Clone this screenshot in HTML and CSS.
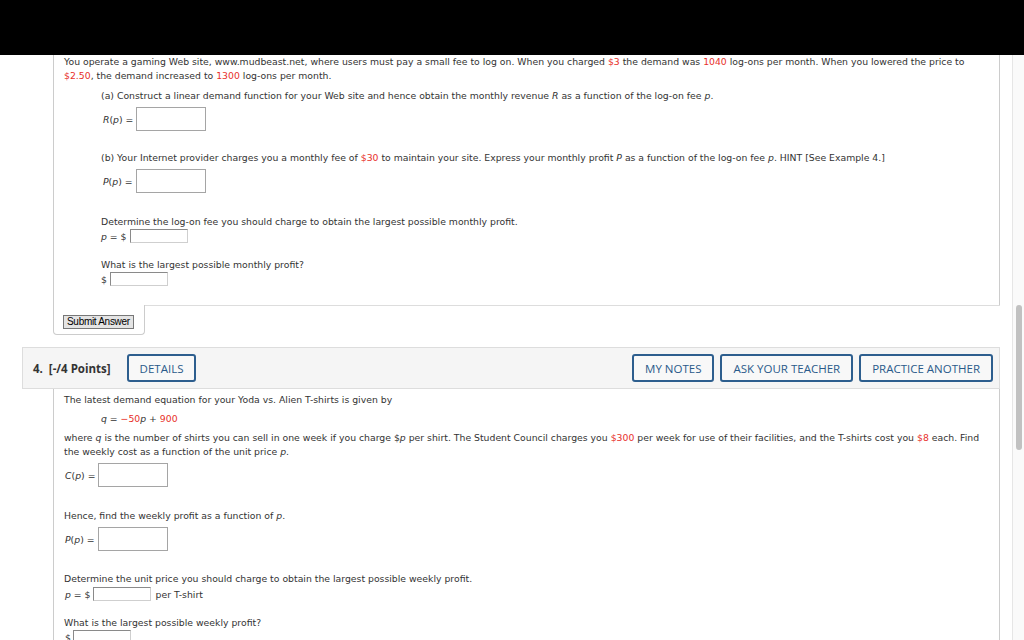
FILE: index.html
```html
<!DOCTYPE html>
<html lang="en">
<head>
<meta charset="utf-8">
<title>Question</title>
<link rel="stylesheet" href="styles.css">
</head>
<body>
<div class="topbar"></div>
<div class="viewport">
  <main class="main">
    <section class="panel">
      <p class="para">You operate a gaming Web site, www.mudbeast.net, where users must pay a small fee to log on. When you charged <span class="red">$3</span> the demand was <span class="red">1040</span> log-ons per month. When you lowered the price to <span class="red">$2.50</span>, the demand increased to <span class="red">1300</span> log-ons per month.</p>
      <div class="part">
        <p class="line">(a) Construct a linear demand function for your Web site and hence obtain the monthly revenue <i>R</i> as a function of the log-on fee <i>p</i>.</p>
        <div class="ans big"><span class="lbl"><i>R</i>(<i>p</i>) =</span><span class="box"></span></div>
        <p class="line gap">(b) Your Internet provider charges you a monthly fee of <span class="red">$30</span> to maintain your site. Express your monthly profit <i>P</i> as a function of the log-on fee <i>p</i>. HINT [See Example 4.]</p>
        <div class="ans big"><span class="lbl"><i>P</i>(<i>p</i>) =</span><span class="box"></span></div>
        <p class="line gapb">Determine the log-on fee you should charge to obtain the largest possible monthly profit.</p>
        <div class="ans small"><span class="lbl"><i>p</i> = $</span><span class="sbox"></span></div>
        <p class="line gap2">What is the largest possible monthly profit?</p>
        <div class="ans small"><span class="lbl">$</span><span class="sbox"></span></div>
      </div>
    </section>
    <div class="foot">
      <div class="tab"><button class="submit" type="button">Submit Answer</button></div>
      <div class="fill"></div>
    </div>

    <section class="q">
      <header class="qhead">
        <span class="qnum">4.&nbsp; [-/4 Points]</span>
        <button class="qbtn details" type="button">DETAILS</button>
        <span class="spacer"></span>
        <button class="qbtn" type="button">MY NOTES</button>
        <button class="qbtn" type="button">ASK YOUR TEACHER</button>
        <button class="qbtn" type="button">PRACTICE ANOTHER</button>
      </header>
      <div class="qbody">
        <p class="line">The latest demand equation for your Yoda vs. Alien T-shirts is given by</p>
        <p class="line eq"><i>q</i> = <span class="red">&minus;50</span><i>p</i> + <span class="red">900</span></p>
        <p class="para eqafter">where <i>q</i> is the number of shirts you can sell in one week if you charge $<i>p</i> per shirt. The Student Council charges you <span class="red">$300</span> per week for use of their facilities, and the T-shirts cost you <span class="red">$8</span> each. Find the weekly cost as a function of the unit price <i>p</i>.</p>
        <div class="ans big"><span class="lbl"><i>C</i>(<i>p</i>) =</span><span class="box"></span></div>
        <p class="line gapq">Hence, find the weekly profit as a function of <i>p</i>.</p>
        <div class="ans big"><span class="lbl"><i>P</i>(<i>p</i>) =</span><span class="box"></span></div>
        <p class="line gapr">Determine the unit price you should charge to obtain the largest possible weekly profit.</p>
        <div class="ans small q4s"><span class="lbl"><i>p</i> = $</span><span class="sbox"></span><span class="after">per T-shirt</span></div>
        <p class="line gap2">What is the largest possible weekly profit?</p>
        <div class="ans small"><span class="lbl">$</span><span class="sbox"></span></div>
      </div>
    </section>
  </main>
  <aside class="scroll"><div class="thumb"></div></aside>
</div>
</body>
</html>
```

FILE: styles.css
```css
* { box-sizing: border-box; }
html, body { margin: 0; padding: 0; }
body {
  width: 1024px;
  height: 640px;
  overflow: hidden;
  background: #fff;
  font-family: "DejaVu Sans", Verdana, sans-serif;
  font-size: 9.3px;
  color: #333;
}
p { margin: 0; }
i { font-style: italic; }
.red { color: #e8302a; }

.topbar { height: 55px; background: #000; }

.viewport { display: flex; height: 585px; overflow: hidden; }
.main { width: 1012px; padding-right: 12px; }
.scroll {
  width: 12px;
  border-left: 1px solid #e6e6e6;
  background: #fafafa;
  padding-top: 250px;
  display: flex;
  justify-content: center;
}
.thumb { width: 6px; height: 145px; border-radius: 3px; background: #c1c1c1; }

.panel {
  margin-left: 53px;
  border-left: 1px solid #ccc;
  border-right: 1px solid #ccc;
  padding: 0 10px 19px 10px;
}
.para { line-height: 14px; }
.line { line-height: 14px; }
.part { padding-left: 37px; padding-top: 6px; }

.ans { display: flex; align-items: center; }
.ans.big { margin-top: 4px; height: 24px; }
.ans.small { height: 14px; margin-top: 0; }
.ans.q4s { margin-top: 1px; }
.lbl { white-space: pre; margin-right: 3px; padding-left: 2px; }
.small .lbl { padding-left: 0; margin-right: 3px; }
.box { display: block; width: 70px; height: 24px; border: 1px solid #a5a5a5; background: #fff; }
.sbox {
  display: block; width: 58px; height: 14px; background: #fff;
  border-top: 1px solid #8a8a8a; border-left: 1px solid #8a8a8a;
  border-right: 1px solid #cfcfcf; border-bottom: 1px solid #cfcfcf;
}
.after { margin-left: 5px; }
.gap { margin-top: 20px; }
.gapb { margin-top: 22px; }
.gap2 { margin-top: 15px; }

.foot { display: flex; margin-left: 53px; }
.tab {
  width: 92px; height: 30px;
  border-left: 1px solid #ccc; border-right: 1px solid #ccc; border-bottom: 1px solid #ccc;
  border-radius: 0 0 4px 4px;
  padding: 10px 0 0 9px;
}
.fill { flex: 1; border-top: 1px solid #ddd; }
.submit {
  display: block;
  margin: 0; padding: 0 3px;
  height: 14px;
  white-space: nowrap;
  font-family: "Liberation Sans", Arial, sans-serif;
  font-size: 10px; line-height: 12px; letter-spacing: -0.3px;
  color: #000;
  background: #e4e4e4;
  border: 1px solid #777;
  border-radius: 0;
}

.q { margin-top: 12px; }
.qhead {
  margin-left: 22px;
  height: 42px;
  display: flex; align-items: center;
  padding: 0 6px 0 10px;
  background: #f5f5f5;
  border: 1px solid #ddd;
  font-family: "Open Sans", sans-serif;
}
.qnum { font-weight: 700; font-size: 11.5px; color: #333; margin-right: 16px; }
.spacer { flex: 1; }
.qbtn {
  height: 28px;
  margin: 0 0 0 6px;
  padding: 0 11px;
  font-family: "Open Sans", sans-serif;
  font-size: 11.5px;
  color: #2a5a8a;
  background: #f8f8f8;
  border: 2px solid #2d5e8e;
  border-radius: 3px;
}
.qbtn.details { margin-left: 0; }
.qbody {
  margin-left: 53px;
  border-left: 1px solid #ccc;
  border-right: 1px solid #ccc;
  padding: 4px 10px 20px 10px;
  height: 260px;
}
.eq { padding-left: 37px; margin-top: 5px; }
.eqafter { margin-top: 5px; }
.qbody .ans.big { margin-top: 4px; }
.qbody .lbl { padding-left: 1px; }
.qbody .big .lbl { margin-right: 3px; }
.qbody .small .lbl { margin-right: 2px; }
.gapq { margin-top: 22px; }
.gapr { margin-top: 21px; }
```
